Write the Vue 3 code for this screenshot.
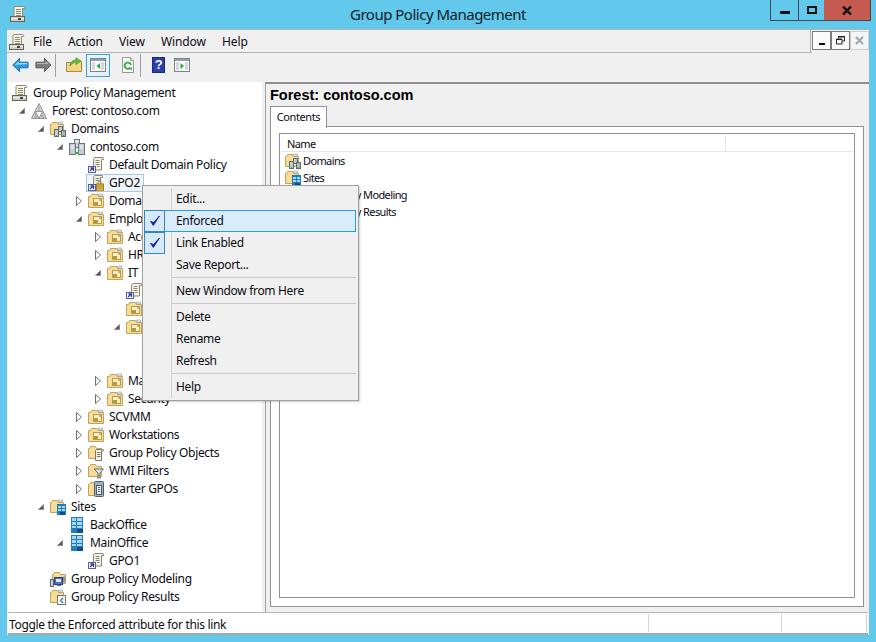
<template>
  <div class="window">
    <svg class="symbols" xmlns="http://www.w3.org/2000/svg">
      <symbol id="i-scroll" viewBox="0 0 16 16">
        <path d="M5 .5h8.500c1 0 1.500 1 1 2h-2v8.500H4V2c0-1 .5-1.500 1-1.500z" fill="#fbf5dc" stroke="#8a8a7c"/>
        <path d="M6 3.500h5M6 5.500h5M6 7.500h5M6 9.500h5" stroke="#8a8a7c"/>
        <rect x=".5" y="10.500" width="14" height="5" fill="#d2d1c6" stroke="#66665c"/>
        <path d="M1 12.500h13" stroke="#f3f2ea"/>
        <rect x="8" y="12" width="3" height="2" fill="#444"/>
      </symbol>
      <symbol id="i-forest" viewBox="0 0 16 16">
        <path d="M8 .5 15.500 15.500H.5z" fill="#ececec" stroke="#8a8a8a"/>
        <path d="M4.500 8.500h7L8 15.500z" fill="#fff" stroke="#8a8a8a"/>
        <path d="M8 .5 10 8.500H6zM2 15.500 4.500 8.500 7 15.500zM9 15.500 11.500 8.500 14 15.500z" fill="#b4b4b4"/>
      </symbol>
      <symbol id="i-ou" viewBox="0 0 16 16">
        <path d="M.5 3.500h2l1-2h6l1 2h5v11H.5z" fill="#f7dc95" stroke="#c4a25c"/>
        <path d="M10.500 1h4v2h-4z" fill="#e6eef5" stroke="#8fa7bd" stroke-width=".7"/>
        <rect x="5.500" y="5.500" width="8" height="7" fill="#fdf0c4" stroke="#b99a52"/>
        <rect x="6" y="9" width="4" height="3" fill="#b39a3c"/>
        <path d="M11 7h2" stroke="#8a7a3c"/>
      </symbol>
      <symbol id="i-domains" viewBox="0 0 16 16">
        <path d="M.5 3.500h1l1-2h5l1 2h5v10H.5z" fill="#f7dc95" stroke="#c4a25c"/>
        <path d="M8.500 1h4v2h-4z" fill="#e6eef5" stroke="#8fa7bd" stroke-width=".7"/>
        <rect x="8.500" y="5.500" width="4" height="5" fill="#c3cbcf" stroke="#5e6a6e"/>
        <rect x="4.500" y="8.500" width="4" height="7" fill="#c3cbcf" stroke="#5e6a6e"/>
        <rect x="11.500" y="9.500" width="4" height="6" fill="#aeb8bc" stroke="#5e6a6e"/>
        <path d="M6 14.500h1" stroke="#35b050"/>
        <path d="M13 14.500h1" stroke="#35b050"/>
      </symbol>
      <symbol id="i-domain" viewBox="0 0 16 16">
        <rect x="5.500" y=".5" width="5" height="8" fill="#d3d9dc" stroke="#6b777b"/>
        <rect x=".5" y="4.500" width="6" height="11" fill="#c3cbcf" stroke="#6b777b"/>
        <rect x="9.500" y="4.500" width="6" height="11" fill="#c3cbcf" stroke="#6b777b"/>
        <path d="M2 7h3M2 9h3M11 7h3M11 9h3M7 2.500h2" stroke="#fff"/>
        <path d="M6 14h4" stroke="#35b050" stroke-width="2"/>
      </symbol>
      <symbol id="i-link" viewBox="0 0 16 16">
        <path d="M5.500 3c0-1 .5-2.500 1.500-2.500h8c.5 0 .8 1 .5 2h-2v10.500H5.500z" fill="#f7f2df" stroke="#85857a"/>
        <path d="M7.500 3.500h4M7.500 5.500h4M7.500 7.500h4M9 9.500h2.500" stroke="#85857a"/>
        <rect x=".5" y="9.500" width="7" height="6" fill="#fff" stroke="#5b5f8a"/>
        <path d="M2 14l2.500-2.500M2.500 11h3v3" fill="none" stroke="#2a35a8" stroke-width="1.300"/>
      </symbol>
      <symbol id="i-linklock" viewBox="0 0 16 16">
        <path d="M5.500 3c0-1 .5-2.500 1.500-2.500h7c.5 0 .8 1 .5 2h-2v8H5.500z" fill="#f7f2df" stroke="#85857a"/>
        <path d="M7.500 3.500h4M7.500 5.500h4" stroke="#85857a"/>
        <rect x=".5" y="9.500" width="7" height="6" fill="#fff" stroke="#5b5f8a"/>
        <path d="M2 14l2.500-2.500M2.500 11h3v3" fill="none" stroke="#2a35a8" stroke-width="1.300"/>
        <path d="M10 9V7.500c0-2 3-2 3 0V9" fill="none" stroke="#8c7130"/>
        <rect x="8.500" y="9" width="7" height="7" fill="#e9b63f" stroke="#a07f2c"/>
        <path d="M9 11h6M9 13h6" stroke="#b98f2c"/>
      </symbol>
      <symbol id="i-gpo" viewBox="0 0 16 16">
        <path d="M.5 3.500h1l1-2h5l1 2h5v10H.5z" fill="#f7dc95" stroke="#c4a25c"/>
        <path d="M7.500 6c0-.5.5-1.500 1-1.500h6.500c.5 0 .5 1 .3 1.500h-1.800v9.500H7.500z" fill="#f5f3e8" stroke="#77776a"/>
        <path d="M9 7.500h3.500M9 9.500h3.500M9 11.500h3.500" stroke="#77776a"/>
      </symbol>
      <symbol id="i-wmi" viewBox="0 0 16 16">
        <path d="M.5 3.500h1l1-2h5l1 2h5v10H.5z" fill="#f7dc95" stroke="#c4a25c"/>
        <path d="M6 6h9.500l-3.500 4v3h-2v-3z" fill="#dfe6ea" stroke="#5e6a6e"/>
        <path d="M9 13.500h4v2H9z" fill="#8d999d"/>
      </symbol>
      <symbol id="i-starter" viewBox="0 0 16 16">
        <path d="M.5 3.500h1l1-2h5l1 2h5v11H.5z" fill="#f7dc95" stroke="#c4a25c"/>
        <rect x="6.500" y=".5" width="9" height="15" rx="1" fill="#9fb2c2" stroke="#4f5f6a"/>
        <rect x="8.500" y="4.500" width="5" height="9" fill="#eef2f5" stroke="#4f5f6a"/>
        <path d="M10 6.500h2M10 8.500h2M10 10.500h2" stroke="#4f5f6a"/>
      </symbol>
      <symbol id="i-sites" viewBox="0 0 16 16">
        <path d="M.5 3.500h1l1-2h5l1 2h5v10H.5z" fill="#f7dc95" stroke="#c4a25c"/>
        <path d="M8.500 1h4v2h-4z" fill="#e6eef5" stroke="#8fa7bd" stroke-width=".7"/>
        <rect x="7" y="5" width="9" height="11" fill="#1f7ec0"/>
        <path d="M8 7h3v2H8zM12 7h3v2h-3zM8 10h3v2H8zM12 10h3v2h-3z" fill="#a9d7f2"/>
        <rect x="10" y="13" width="5" height="3" fill="#0f4f86"/>
      </symbol>
      <symbol id="i-site" viewBox="0 0 16 16">
        <rect x="2" y="0" width="12" height="16" fill="#1f7ec0"/>
        <path d="M3 1h4v3H3zM8 1h5v3H8zM3 5h4v3H3zM8 5h5v3H8zM3 9h4v2H3zM8 9h5v2H8z" fill="#a9d7f2"/>
        <rect x="8" y="12" width="6" height="4" fill="#0f4f86"/>
      </symbol>
      <symbol id="i-modeling" viewBox="0 0 16 16">
        <path d="M2.500 3.500h1l1-2h5l1 2h5v9h-13z" fill="#f7dc95" stroke="#c4a25c"/>
        <rect x=".5" y="8.500" width="3" height="7" fill="#c3cbcf" stroke="#5e6a6e"/>
        <rect x="4.500" y="6.500" width="8" height="7" fill="#4f6fc0" stroke="#2f3f7a"/>
        <rect x="6" y="8" width="5" height="3" fill="#dfeaff"/>
        <path d="M13 5.500h2.500v6H13z" fill="#8d999d"/>
        <path d="M7 14.500h4" stroke="#5e6a6e"/>
      </symbol>
      <symbol id="i-results" viewBox="0 0 16 16">
        <path d="M.5 3.500h1l1-2h5l1 2h5v10H.5z" fill="#f7dc95" stroke="#c4a25c"/>
        <path d="M8.500 1h4v2h-4z" fill="#e6eef5" stroke="#8fa7bd" stroke-width=".7"/>
        <rect x="7.500" y="6.500" width="8" height="9" fill="#f6f6f6" stroke="#76787a"/>
        <path d="M13 9l-2.500 2.500L13 14" fill="none" stroke="#3a7c8a" stroke-width="1.200"/>
      </symbol>
      <symbol id="i-back" viewBox="0 0 18 16">
        <path d="M.8 8 8 1v4h9v6H8v4z" fill="#2c9be6" stroke="#1569a8"/>
        <path d="M3 8l4-4v2h9v1z" fill="#9bd5f7"/>
      </symbol>
      <symbol id="i-forward" viewBox="0 0 18 16">
        <path d="M17 8 10 1v4H1v6h9v4z" fill="#7d7d7d" stroke="#555"/>
        <path d="M11 4v2H2v1h13z" fill="#b4b4b4"/>
      </symbol>
      <symbol id="i-up" viewBox="0 0 16 16">
        <path d="M.5 5.500h5l1-1h9v10H.5z" fill="#f3d583" stroke="#a98c45"/>
        <path d="M4 9c0-4 3-6 6-6V.8L15 4l-5 3.500V5C7.500 5 5.500 7 4 9z" fill="#63c23c" stroke="#3b8f20" stroke-width=".7"/>
      </symbol>
      <symbol id="i-pane-left" viewBox="0 0 16 16">
        <rect x=".5" y="1.500" width="15" height="13" fill="#fff" stroke="#79838c"/>
        <rect x="1" y="2" width="14" height="2" fill="#93a1ad"/>
        <path d="M2 6h3M2 8h3M2 10h3M2 12h3M11 6h3M11 8h3M11 10h3M11 12h3" stroke="#a9b4bd"/>
        <path d="M10 6v6L6.500 9z" fill="#28a745"/>
      </symbol>
      <symbol id="i-pane-right" viewBox="0 0 16 16">
        <rect x=".5" y="1.500" width="15" height="13" fill="#fff" stroke="#79838c"/>
        <rect x="1" y="2" width="14" height="2" fill="#93a1ad"/>
        <path d="M2 6h3M2 8h3M2 10h3M2 12h3M11 6h3M11 8h3M11 10h3M11 12h3" stroke="#a9b4bd"/>
        <path d="M6.500 6v6L10 9z" fill="#28a745"/>
      </symbol>
      <symbol id="i-refresh" viewBox="0 0 16 16">
        <path d="M2.500.5h8l3 3v12h-11z" fill="#fafafa" stroke="#9a9a9a"/>
        <path d="M10.500.5v3h3" fill="#e0e0e0" stroke="#9a9a9a"/>
        <path d="M11 8a3.200 3.200 0 1 0-1 3" fill="none" stroke="#35b04a" stroke-width="2"/>
        <path d="M8 10.500h4v3z" fill="#35b04a"/>
      </symbol>
      <symbol id="i-check" viewBox="0 0 12 12">
        <path d="M1.600 6.300 4.300 10.500 10.500 1 4.500 7.500z" fill="#1d1d9c" stroke="#1d1d9c" stroke-width=".9"/>
      </symbol>
    </svg>

    <header class="titlebar">
      <svg class="ico title-ico"><use href="#i-scroll" /></svg>
      <div class="title">Group Policy Management</div>
      <div class="winbtns">
        <button class="winbtn min"><span class="min-glyph"></span></button>
        <button class="winbtn max"><span class="max-glyph"></span></button>
        <button class="winbtn close"><svg width="10" height="9" viewBox="0 0 10 9"><path d="M1 .5 9 8.500M9 .5 1 8.500" stroke="#111" stroke-width="2.400" /></svg></button>
      </div>
    </header>

    <div class="client">
      <div class="menubar">
        <div class="menu-left">
          <svg class="ico"><use href="#i-scroll" /></svg>
          <span v-for="m in menus" :key="m">{{ m }}</span>
        </div>
        <div class="mdi">
          <button class="mdibtn"><span class="mdi-min"></span></button>
          <button class="mdibtn">
            <svg width="9" height="9" viewBox="0 0 9 9"><path d="M2.500 2V.5h6v4.500H6.500M.5 3h5.500v5H.5z" fill="none" stroke="#222" /><path d="M2 1h7M0 3.500h6" stroke="#222" /></svg>
          </button>
          <button class="mdibtn off">
            <svg width="9" height="9" viewBox="0 0 9 9"><path d="M1 1l7 7M8 1 1 8" stroke="#9aa6b0" stroke-width="2" /></svg>
          </button>
        </div>
      </div>

      <div class="toolbar">
        <svg class="tool-arrow back"><use href="#i-back" /></svg>
        <svg class="tool-arrow fwd"><use href="#i-forward" /></svg>
        <i class="tool-sep"></i>
        <svg class="ico up"><use href="#i-up" /></svg>
        <span class="tool-on"><svg class="ico"><use href="#i-pane-left" /></svg></span>
        <svg class="ico refresh"><use href="#i-refresh" /></svg>
        <i class="tool-sep sep2"></i>
        <span class="help">?</span>
        <svg class="ico pane-r"><use href="#i-pane-right" /></svg>
      </div>

      <div class="panes">
        <ul class="tree">
          <li v-for="(n, i) in nodes" :key="i" class="row" :style="{ paddingLeft: 2 + n.level * 19 + 'px' }">
            <span class="exp">
              <svg v-if="n.exp === 'open'" width="6" height="6" viewBox="0 0 6 6"><path d="M5.500.5v5h-5z" fill="#595959" stroke="#8a8a8a" /></svg>
              <svg v-else-if="n.exp === 'closed'" width="6" height="10" viewBox="0 0 6 10"><path d="M.5.5 5.500 5 .5 9.500z" fill="#fff" stroke="#6e6e6e" /></svg>
            </span>
            <span class="node" :class="{ sel: n.sel }">
              <svg class="ico"><use :href="'#i-' + n.icon" /></svg>
              <span v-if="n.label" class="label">{{ n.label }}</span>
            </span>
          </li>
        </ul>

        <section class="detail">
          <h1>Forest: contoso.com</h1>
          <div class="tabs"><span class="tab">Contents</span></div>
          <div class="tabpage">
            <div class="list">
              <div class="list-head"><span class="col-name">Name</span><span class="col-rest"></span></div>
              <div v-for="r in rows" :key="r.label" class="list-row">
                <svg class="ico"><use :href="'#i-' + r.icon" /></svg>
                <span>{{ r.label }}</span>
              </div>
            </div>
          </div>
        </section>
      </div>

      <footer class="status">
        <span class="st-text">Toggle the Enforced attribute for this link</span>
        <span class="st-cell a"></span>
        <span class="st-cell b"></span>
      </footer>

      <div class="ctx">
        <template v-for="(m, i) in ctxItems" :key="i">
          <div v-if="m.sep" class="ctx-sep"></div>
          <div v-else class="ctx-item" :class="{ hot: m.hot }">
            <span class="ctx-check" :class="{ on: m.checked }">
              <svg v-if="m.checked" width="12" height="12"><use href="#i-check" /></svg>
            </span>
            <span class="ctx-label">{{ m.label }}</span>
          </div>
        </template>
      </div>
    </div>
  </div>
</template>

<script setup>
const menus = ['File', 'Action', 'View', 'Window', 'Help']

// rows 11-15 sit completely behind the context menu, so they carry no label
const nodes = [
  { level: 0, icon: 'scroll', label: 'Group Policy Management' },
  { level: 1, icon: 'forest', label: 'Forest: contoso.com', exp: 'open' },
  { level: 2, icon: 'domains', label: 'Domains', exp: 'open' },
  { level: 3, icon: 'domain', label: 'contoso.com', exp: 'open' },
  { level: 4, icon: 'link', label: 'Default Domain Policy' },
  { level: 4, icon: 'linklock', label: 'GPO2', sel: true },
  { level: 4, icon: 'ou', label: 'Domain Controllers', exp: 'closed' },
  { level: 4, icon: 'ou', label: 'Employees', exp: 'open' },
  { level: 5, icon: 'ou', label: 'Accounting', exp: 'closed' },
  { level: 5, icon: 'ou', label: 'HR', exp: 'closed' },
  { level: 5, icon: 'ou', label: 'IT', exp: 'open' },
  { level: 6, icon: 'link', label: '' },
  { level: 6, icon: 'ou', label: '' },
  { level: 6, icon: 'ou', label: '', exp: 'open' },
  { level: 7, icon: 'ou', label: '' },
  { level: 7, icon: 'ou', label: '' },
  { level: 5, icon: 'ou', label: 'Marketing', exp: 'closed' },
  { level: 5, icon: 'ou', label: 'Security', exp: 'closed' },
  { level: 4, icon: 'ou', label: 'SCVMM', exp: 'closed' },
  { level: 4, icon: 'ou', label: 'Workstations', exp: 'closed' },
  { level: 4, icon: 'gpo', label: 'Group Policy Objects', exp: 'closed' },
  { level: 4, icon: 'wmi', label: 'WMI Filters', exp: 'closed' },
  { level: 4, icon: 'starter', label: 'Starter GPOs', exp: 'closed' },
  { level: 2, icon: 'sites', label: 'Sites', exp: 'open' },
  { level: 3, icon: 'site', label: 'BackOffice' },
  { level: 3, icon: 'site', label: 'MainOffice', exp: 'open' },
  { level: 4, icon: 'link', label: 'GPO1' },
  { level: 2, icon: 'modeling', label: 'Group Policy Modeling' },
  { level: 2, icon: 'results', label: 'Group Policy Results' },
]

const rows = [
  { icon: 'domains', label: 'Domains' },
  { icon: 'sites', label: 'Sites' },
  { icon: 'modeling', label: 'Group Policy Modeling' },
  { icon: 'results', label: 'Group Policy Results' },
]

const ctxItems = [
  { label: 'Edit...' },
  { label: 'Enforced', checked: true, hot: true },
  { label: 'Link Enabled', checked: true },
  { label: 'Save Report...' },
  { sep: true },
  { label: 'New Window from Here' },
  { sep: true },
  { label: 'Delete' },
  { label: 'Rename' },
  { label: 'Refresh' },
  { sep: true },
  { label: 'Help' },
]
</script>

<style>
html, body {
  margin: 0;
  background: #63c9ec;
}
</style>

<style scoped>
.window {
  width: 876px;
  height: 642px;
  display: flex;
  flex-direction: column;
  background: #63c9ec;
  font-family: "Noto Sans", "Liberation Sans", sans-serif;
  font-size: 12px;
  letter-spacing: -0.33px;
  color: #0b0b12;
  overflow: hidden;
}

.symbols {
  display: none;
}

.ico {
  width: 16px;
  height: 16px;
  flex: none;
}

.titlebar {
  height: 29px;
  flex: none;
  display: grid;
  grid-template-columns: 1fr auto 1fr;
  align-items: start;
  padding: 0 5px;
}

.title-ico {
  margin: 6px 0 0 5px;
}

.title {
  font-size: 15px;
  line-height: 29px;
  letter-spacing: -0.5px;
  color: #10202a;
}

.winbtns {
  justify-self: end;
  display: flex;
  height: 21px;
  border: 1px solid #3a4a56;
  border-top: 0;
  box-sizing: border-box;
}

.winbtn {
  border: 0;
  padding: 0;
  background: none;
  height: 20px;
  display: flex;
  align-items: center;
  justify-content: center;
}

.winbtn.min {
  width: 28px;
  border-right: 1px solid #3a4a56;
}

.min-glyph {
  width: 10px;
  height: 3px;
  background: #111;
  margin-top: 5px;
}

.winbtn.max {
  width: 25px;
}

.max-glyph {
  width: 6px;
  height: 4px;
  border: 2px solid #111;
}

.winbtn.close {
  width: 46px;
  background: #c45a50;
}

.client {
  position: relative;
  flex: 1;
  margin: 0 7px 7px;
  background: #f0f0f0;
  display: flex;
  flex-direction: column;
  min-height: 0;
  border-top: 1px solid #b4b4b4;
}

.menubar {
  height: 22px;
  flex: none;
  display: flex;
  justify-content: space-between;
  border-bottom: 1px solid #b4b4b4;
}

.menu-left {
  flex: 1;
  display: flex;
  align-items: center;
  gap: 16px;
  padding: 1px 0 0 2px;
  border-right: 1px solid #b4b4b4;
  margin-right: 1px;
  letter-spacing: -0.08px;
}

.menu-left .ico {
  margin-right: -8px;
}

.mdi {
  display: flex;
  padding: 1px 0 3px;
  margin-bottom: -1px;
  background: #f0f0f0;
}

.mdibtn {
  width: 19px;
  height: 19px;
  box-sizing: border-box;
  background: #fbfbfb;
  border: 1px solid #7c7c7c;
  padding: 0;
  display: flex;
  align-items: center;
  justify-content: center;
}

.mdibtn.off {
  border-color: #cfcfcf;
  background: #f4f4f4;
}

.mdi-min {
  width: 6px;
  height: 2px;
  background: #111;
  margin-top: 6px;
}

.toolbar {
  height: 29px;
  box-sizing: border-box;
  flex: none;
  display: flex;
  align-items: center;
  padding: 0 0 5px 5px;
}

.tool-arrow {
  width: 17px;
  height: 16px;
  flex: none;
}

.fwd {
  margin-left: 6px;
}

.tool-sep {
  width: 1px;
  height: 23px;
  background: #a0a0a0;
  margin-left: 3px;
}

.up {
  margin-left: 10px;
}

.tool-on {
  width: 24px;
  height: 23px;
  box-sizing: border-box;
  margin-left: 4px;
  border: 1px solid #3ba0de;
  background: #e6f2fb;
  display: flex;
  align-items: center;
  justify-content: center;
}

.refresh {
  margin-left: 10px;
}

.sep2 {
  margin-left: 4px;
}

.help {
  width: 13px;
  height: 16px;
  margin-left: 11px;
  background: #2b3fa8;
  border: 1px solid #1a2a7a;
  box-sizing: border-box;
  color: #fff;
  font: bold 13px/14px "Liberation Sans", sans-serif;
  text-align: center;
}

.pane-r {
  margin-left: 9px;
}

.panes {
  flex: 1;
  min-height: 0;
  display: flex;
}

.tree {
  list-style: none;
  margin: 0 0 0 1px;
  padding: 2px 0 0;
  width: 254px;
  background: #fff;
  flex: none;
  overflow: hidden;
}

.row {
  height: 18px;
  display: flex;
  align-items: center;
  white-space: nowrap;
}

.exp {
  width: 10px;
  flex: none;
  margin-left: -10px;
  display: flex;
  align-items: center;
}

.node {
  display: inline-flex;
  align-items: center;
  height: 18px;
  box-sizing: border-box;
  border: 1px solid transparent;
  padding: 0 3px 0 1px;
  gap: 5px;
}

.node.sel {
  border-color: #a3c8ea;
  background: #f1f6fc;
}

.label {
  margin-top: -1px;
}

.detail {
  flex: 1;
  margin-left: 3px;
  border-left: 1px solid #a0a0a0;
  border-top: 2px solid #8f8f8f;
  display: flex;
  flex-direction: column;
  min-width: 0;
  padding: 0 5px 5px 4px;
  box-sizing: border-box;
}

.detail h1 {
  margin: 0;
  font: bold 14.5px/23px "Liberation Sans", sans-serif;
  letter-spacing: 0;
  height: 22px;
  color: #000;
}

.tabs {
  height: 21px;
  display: flex;
  margin-bottom: -1px;
  position: relative;
}

.tab {
  width: 57px;
  box-sizing: border-box;
  height: 22px;
  border: 1px solid #8f929a;
  border-bottom: 0;
  background: #fff;
  text-align: center;
  font-size: 11px;
  line-height: 19px;
  letter-spacing: -0.4px;
}

.tabpage {
  flex: 1;
  border: 1px solid #8f929a;
  background: #fff;
  padding: 6px 8px 8px;
  min-height: 0;
  display: flex;
}

.list {
  flex: 1;
  border: 1px solid #8f929a;
  padding: 1px;
  font-size: 11px;
  letter-spacing: -0.62px;
}

.list-head {
  height: 16px;
  display: flex;
  border-bottom: 1px solid #e5e5e5;
  line-height: 18px;
}

.col-name {
  width: 438px;
  padding-left: 6px;
  border-right: 1px solid #e5e5e5;
}

.list-row {
  height: 17px;
  display: flex;
  align-items: center;
  gap: 2px;
  padding-left: 4px;
}

.status {
  height: 23px;
  flex: none;
  display: flex;
  margin: 0 1px;
  background: #fff;
  border-top: 1px solid #b4b4b4;
  border-bottom: 2px solid #a8a8a8;
  box-sizing: border-box;
  line-height: 23px;
}

.st-text {
  width: 639px;
  padding-left: 1px;
  flex: none;
}

.st-cell {
  border-left: 1px solid #d4d4d4;
  margin: 1px 0;
}

.st-cell.a {
  width: 132px;
}

.st-cell.b {
  flex: 1;
  border-right: 1px solid #d4d4d4;
  margin-right: 1px;
}

.ctx {
  position: absolute;
  left: 135px;
  top: 155px;
  width: 217px;
  box-sizing: border-box;
  border: 1px solid #a0a0a0;
  padding: 2px;
  background: #f0f0f0;
  box-shadow: 1px 1px 2px rgba(0, 0, 0, 0.2);
}

.ctx::before {
  content: "";
  position: absolute;
  left: 28px;
  top: 2px;
  bottom: 2px;
  width: 1px;
  background: #d0d0d0;
}

.ctx-item {
  position: relative;
  height: 22px;
  display: flex;
  align-items: center;
  box-sizing: border-box;
  border: 1px solid transparent;
}

.ctx-item.hot {
  border-color: #26a0da;
  background: #d9ebfc;
}

.ctx-check {
  width: 21px;
  height: 22px;
  flex: none;
  margin: -1px 11px -1px -2px;
  box-sizing: border-box;
  display: flex;
  align-items: center;
  justify-content: center;
}

.ctx-check.on {
  border: 1px solid #3a84b8;
  background: #d5e9fa;
}

.ctx-label {
  margin-top: -2px;
}

.ctx-sep {
  height: 1px;
  margin: 1px 0 2px 27px;
  background: #c8c8c8;
}
</style>
